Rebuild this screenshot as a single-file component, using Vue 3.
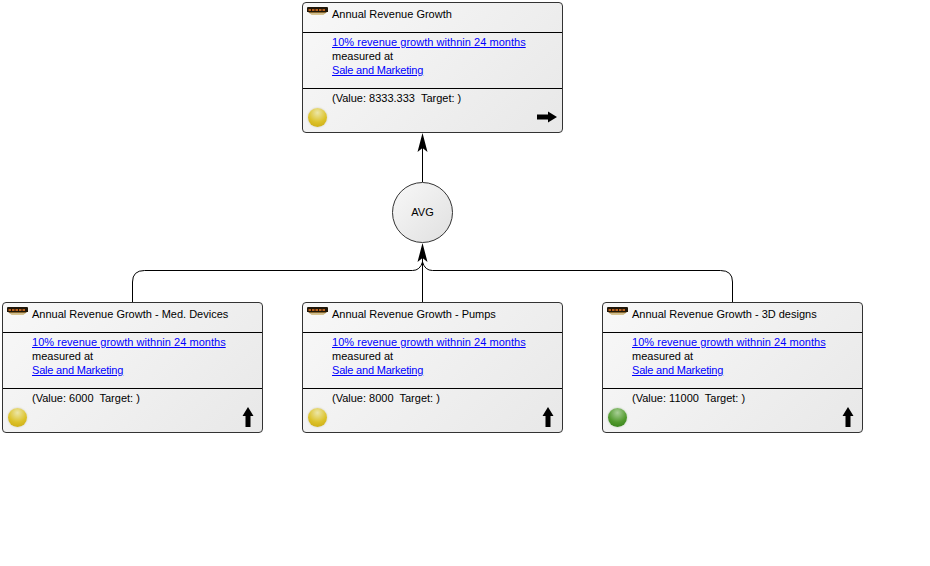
<script setup>
const nodes = [
  { id: 1, x: 302, y: 2, title: 'Annual Revenue Growth', value: '8333.333', light: 'yellow', dir: 'right' },
  { id: 2, x: 2, y: 302, title: 'Annual Revenue Growth - Med. Devices', value: '6000', light: 'yellow', dir: 'up' },
  { id: 3, x: 302, y: 302, title: 'Annual Revenue Growth - Pumps', value: '8000', light: 'yellow', dir: 'up' },
  { id: 4, x: 602, y: 302, title: 'Annual Revenue Growth - 3D designs', value: '11000', light: 'green', dir: 'up' }
]
const pos = (n) => ({ left: n.x + 'px', top: n.y + 'px' })
</script>

<template>
  <div class="canvas">
    <svg class="wires" width="930" height="566" viewBox="0 0 930 566">
      <g fill="none" stroke="#000" stroke-width="1">
        <path d="M422.5 302V250" />
        <path d="M422.5 182V140" />
        <path d="M132.5 302V282Q132.5 270.500 144.500 270.500H412.500Q420 270.500 422.500 262" />
        <path d="M732.500 302V282Q732.500 270.500 720.500 270.500H432.500Q425 270.500 422.500 262" />
      </g>
      <path d="M422.500 133L427.500 152L422.500 148L417.500 152Z" fill="#000" />
      <path d="M422.500 243L427.500 262L422.500 258L417.500 262Z" fill="#000" />
    </svg>

    <div class="avg">AVG</div>

    <article v-for="n in nodes" :key="n.id" class="card" :style="pos(n)">
      <header class="head">
        <svg class="logo" width="21" height="8" viewBox="0 0 21 8">
          <path d="M0 1Q0 0 1 0H20Q21 0 21 1V5H0Z" fill="#1f1608" />
          <path d="M1.500 2H4V4H1.500ZM5 2H7.500V4H5ZM8.500 2H11V4H8.500ZM12 2H14.500V4H12ZM15.500 2H18V4H15.500Z" fill="#b8601c" />
          <path d="M1 5H20L18 6.500H3Z" fill="#8a6a30" />
          <path d="M3 6.500H18L16.500 8H4.500Z" fill="#d8c48c" />
        </svg>
        <span class="title">{{ n.title }}</span>
      </header>
      <section class="body">
        <a class="link" href="#">10% revenue growth withnin 24 months</a>
        <span>measured at</span>
        <a class="link dept" href="#">Sale and Marketing</a>
      </section>
      <footer class="foot">
        <span class="value">(Value: {{ n.value }}&nbsp; Target: )</span>
        <div class="status">
          <span class="light" :class="n.light"></span>
          <svg v-if="n.dir === 'right'" class="arrow" width="22" height="12" viewBox="0 0 22 12">
            <path d="M1 3.500H12V.5L21 6L12 11.500V8.500H1Z" fill="#000" />
          </svg>
          <svg v-else class="arrow up" width="12" height="20" viewBox="0 0 12 20">
            <path d="M6 0L11.500 9H8.500V20H3.500V9H.5Z" fill="#000" />
          </svg>
        </div>
      </footer>
    </article>
  </div>
</template>

<style scoped>
.canvas {
  position: relative;
  width: 930px;
  height: 566px;
  overflow: hidden;
  background: #fff;
  font-family: "Liberation Sans", Arial, sans-serif;
  font-size: 11px;
  line-height: 14px;
  color: #000;
}
.wires {
  position: absolute;
  left: 0;
  top: 0;
}
.avg {
  position: absolute;
  left: 392px;
  top: 182px;
  width: 61px;
  height: 61px;
  box-sizing: border-box;
  display: flex;
  align-items: center;
  justify-content: center;
  padding-bottom: 2px;
  border: 1px solid #333;
  border-radius: 50%;
  background: linear-gradient(135deg, #f8f8f8, #e0e0e0);
}
.card {
  position: absolute;
  width: 261px;
  height: 131px;
  box-sizing: border-box;
  display: flex;
  flex-direction: column;
  border: 1px solid #333;
  border-radius: 4px;
  background: linear-gradient(135deg, #f8f8f8, #e8e8e8);
}
.head {
  height: 29px;
  flex: none;
  display: flex;
  align-items: flex-start;
  border-bottom: 1px solid #000;
}
.logo {
  margin: 4px 0 0 4px;
  flex: none;
}
.title {
  margin: 4px 0 0 4px;
}
.body {
  height: 56px;
  flex: none;
  display: flex;
  flex-direction: column;
  align-items: flex-start;
  box-sizing: border-box;
  padding: 2px 0 0 29px;
  border-bottom: 1px solid #000;
}
.link {
  color: #00f;
  text-decoration: underline;
  letter-spacing: 0.03px;
}
.dept {
  letter-spacing: -0.2px;
}
.foot {
  flex: 1;
  display: flex;
  flex-direction: column;
  padding: 2px 4px 4px 5px;
}
.value {
  padding-left: 24px;
}
.status {
  flex: 1;
  display: flex;
  justify-content: space-between;
  align-items: flex-end;
}
.light {
  width: 19px;
  height: 19px;
  border-radius: 50%;
  margin-bottom: 1px;
}
.light.yellow {
  background: radial-gradient(circle at 50% 25%, #ece6a8 0%, #dcc22a 55%, #c8a60c 100%);
  box-shadow: 0 0 2px #c8c4a8;
}
.light.green {
  background: radial-gradient(circle at 50% 25%, #a8cf96 0%, #529a2e 55%, #2e7a14 100%);
  box-shadow: 0 0 2px #a8c0a0;
}
.arrow {
  margin-bottom: 5px;
}
.arrow.up {
  margin-right: 4px;
  margin-bottom: 1px;
}
</style>
